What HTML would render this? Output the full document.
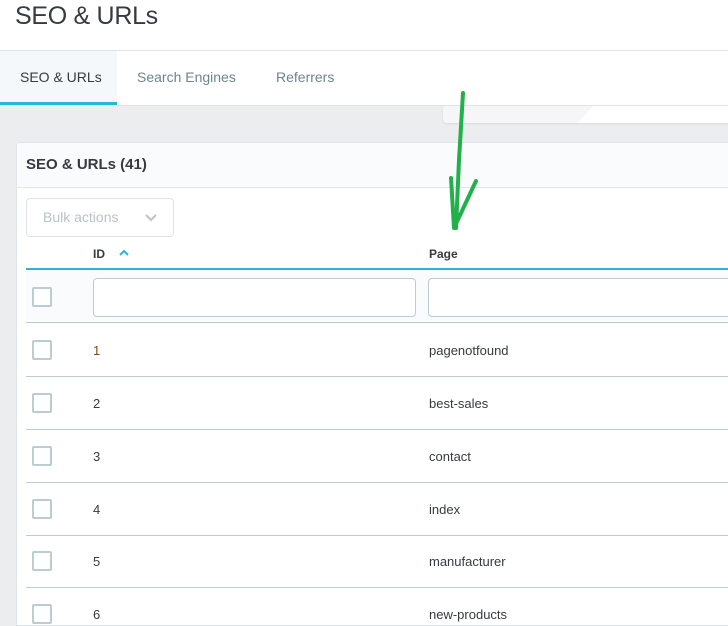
<!DOCTYPE html>
<html><head><style>
*{margin:0;padding:0;box-sizing:border-box}
body{width:728px;height:626px;overflow:hidden;background:#ebedef;font-family:"Liberation Sans",sans-serif;position:relative;color:#363a41}
.a{position:absolute}
.cb{position:absolute;left:32px;width:20px;height:20px;border:2px solid #bbcdd2;border-radius:2px;background:#fff}
.t{position:absolute;font-size:13px;color:#363a41;line-height:16px}
.ln{position:absolute;left:26px;right:0;height:1px;background:#bbcdd2}
</style></head><body>
<div class="a" style="left:0;top:0;width:728px;height:51px;background:#fff;border-bottom:1px solid #dfe3e6"></div>
<div class="a" style="left:15px;top:2px;font-size:25px;color:#363a41;letter-spacing:-0.3px">SEO &amp; URLs</div>
<div class="a" style="left:0;top:51px;width:728px;height:55px;background:#fff;border-bottom:1px solid #dfe3e6"></div>
<div class="a" style="left:0;top:51px;width:117px;height:54px;background:#f4f8fb;border-bottom:3px solid #25b9d7"></div>
<div class="a" style="left:20px;top:69px;font-size:14px;color:#363a41">SEO &amp; URLs</div>
<div class="a" style="left:137px;top:69px;font-size:14px;color:#6c868e">Search Engines</div>
<div class="a" style="left:276px;top:69px;font-size:14px;color:#6c868e">Referrers</div>
<div class="a" style="left:443px;top:106px;width:285px;height:17px;background:#fff;border-radius:0 0 0 4px;box-shadow:0 1px 2px rgba(0,0,0,.08)"></div>
<div class="a" style="left:443px;top:106px;width:150px;height:17px;background:#f6f6f9;clip-path:polygon(0 0,100% 0,90% 100%,0 100%);border-radius:0 0 0 4px"></div>
<div class="a" style="left:16px;top:142px;width:712px;height:484px;background:#fff;border:1px solid #dbe6e9;border-right:none;border-radius:4px 0 0 0"></div>
<div class="a" style="left:17px;top:143px;width:711px;height:45px;background:#fafbfc;border-bottom:1px solid #dbe6e9"></div>
<div class="a" style="left:26px;top:156px;font-size:15px;font-weight:bold;color:#363a41">SEO &amp; URLs (41)</div>
<div class="a" style="left:26px;top:198px;width:148px;height:39px;border:1px solid #dfe3e6;border-radius:4px;background:#fff"></div>
<div class="a" style="left:43px;top:209px;font-size:14px;color:#b7c3c8">Bulk actions</div>
<svg class="a" style="left:144px;top:213px" width="14" height="10"><path d="M2 2 L7 7 L12 2" stroke="#b7c3c8" stroke-width="2" fill="none"/></svg>
<div class="t" style="left:93px;top:246px;font-weight:bold;font-size:12px">ID</div>
<svg class="a" style="left:118px;top:249px" width="12" height="8"><path d="M2 6 L6 2 L10 6" stroke="#25b9d7" stroke-width="2" fill="none"/></svg>
<div class="t" style="left:429px;top:246px;font-weight:bold;font-size:12px">Page</div>
<div class="a" style="left:26px;top:268px;right:0;height:2px;background:#25b9d7"></div>
<div class="a" style="left:26px;top:270px;right:0;height:52px;background:#fafbfc"></div>
<div class="cb" style="top:287px"></div>
<div class="a" style="left:93px;top:278px;width:323px;height:39px;border:1px solid #bbcdd2;border-radius:4px;background:#fff"></div>
<div class="a" style="left:428px;top:278px;width:310px;height:39px;border:1px solid #bbcdd2;border-radius:4px;background:#fff"></div>
<div class="ln" style="top:322px"></div>
<div class="cb" style="top:340px"></div><div class="t" style="left:93px;top:343px;color:#7a4b14">1</div><div class="t" style="left:429px;top:343px">pagenotfound</div>
<div class="ln" style="top:376px"></div>
<div class="cb" style="top:393px"></div><div class="t" style="left:93px;top:396px">2</div><div class="t" style="left:429px;top:396px">best-sales</div>
<div class="ln" style="top:429px"></div>
<div class="cb" style="top:446px"></div><div class="t" style="left:93px;top:449px">3</div><div class="t" style="left:429px;top:449px">contact</div>
<div class="ln" style="top:482px"></div>
<div class="cb" style="top:499px"></div><div class="t" style="left:93px;top:502px">4</div><div class="t" style="left:429px;top:502px">index</div>
<div class="ln" style="top:535px"></div>
<div class="cb" style="top:551px"></div><div class="t" style="left:93px;top:554px">5</div><div class="t" style="left:429px;top:554px">manufacturer</div>
<div class="ln" style="top:587px"></div>
<div class="cb" style="top:604px"></div><div class="t" style="left:93px;top:607px">6</div><div class="t" style="left:429px;top:607px">new-products</div>
<svg class="a" style="left:0;top:0" width="728" height="626"><path d="M463 93 L459 160 L456 228 M451 178 L454 228 L476 181" stroke="#22b04b" stroke-width="4" fill="none" stroke-linecap="round" stroke-linejoin="round"/></svg>
</body></html>
